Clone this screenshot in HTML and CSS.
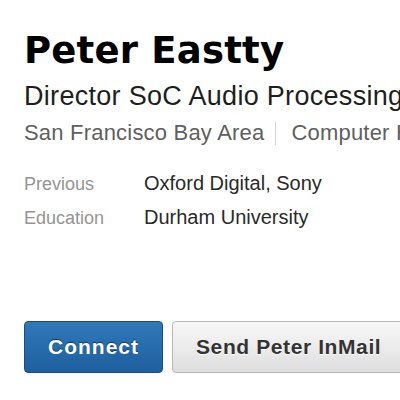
FILE: index.html
```html
<!DOCTYPE html>
<html>
<head>
<meta charset="utf-8">
<link rel="stylesheet" href="styles.css">
</head>
<body>
<div class="profile">
  <h1 class="name">Peter Eastty</h1>
  <div class="headline">Director SoC Audio Processing</div>
  <div class="meta">
    <span class="loc">San Francisco Bay Area</span>
    <span class="sep"></span>
    <span class="industry">Computer Hardware</span>
  </div>
  <dl class="facts">
    <dt>Previous</dt>
    <dd>Oxford Digital, Sony</dd>
    <dt>Education</dt>
    <dd>Durham University</dd>
  </dl>
  <div class="actions">
    <button class="btn btn-primary">Connect</button>
    <button class="btn btn-secondary">Send Peter InMail</button>
  </div>
</div>
</body>
</html>
```

FILE: styles.css
```css
html, body {
  margin: 0;
  padding: 0;
  background: #fff;
  overflow: hidden;
}
body {
  width: 400px;
  height: 400px;
  font-family: "Liberation Sans", Arial, sans-serif;
}
.profile {
  padding: 31px 0 0 24px;
  white-space: nowrap;
}
.name {
  margin: 0;
  font-family: "DejaVu Sans", "Liberation Sans", sans-serif;
  font-size: 37px;
  line-height: 40px;
  font-weight: bold;
  color: #000;
  letter-spacing: 0.2px;
}
.headline {
  margin-top: 9px;
  font-size: 27px;
  line-height: 32px;
  color: #1e1e1e;
  letter-spacing: 0.3px;
}
.meta {
  margin-top: 7px;
  display: flex;
  align-items: center;
  font-size: 22px;
  line-height: 28px;
  color: #5f5f5f;
  letter-spacing: 0.2px;
}
.meta span {
  flex-shrink: 0;
}
.sep {
  width: 1px;
  height: 23px;
  background: #d2d2d2;
  margin: 0 15px 0 11px;
}
.facts {
  margin: 20px 0 0;
  display: grid;
  grid-template-columns: 120px 1fr;
  align-items: baseline;
}
.facts dt {
  font-size: 18px;
  line-height: 33px;
  color: #949494;
}
.facts dd {
  margin: 0;
  font-size: 20px;
  line-height: 33px;
  color: #2a2a2a;
}
.actions {
  margin-top: 86px;
  display: flex;
  gap: 9px;
}
.btn {
  height: 52px;
  padding: 0 23px;
  font-family: "Liberation Sans", Arial, sans-serif;
  font-size: 21px;
  font-weight: bold;
  letter-spacing: 1px;
  border-radius: 4px;
  flex-shrink: 0;
}
.btn-primary {
  color: #fff;
  background: linear-gradient(#3079b9, #1e5f9f);
  border: 1px solid #1a4e80;
  text-shadow: 0 -1px 1px rgba(0, 0, 0, 0.5);
}
.btn-secondary {
  color: #333;
  background: linear-gradient(#f8f8f8, #dedede);
  border: 1px solid #b7b7b7;
  text-shadow: 0 1px 0 #fff;
  letter-spacing: 0.6px;
}
```
